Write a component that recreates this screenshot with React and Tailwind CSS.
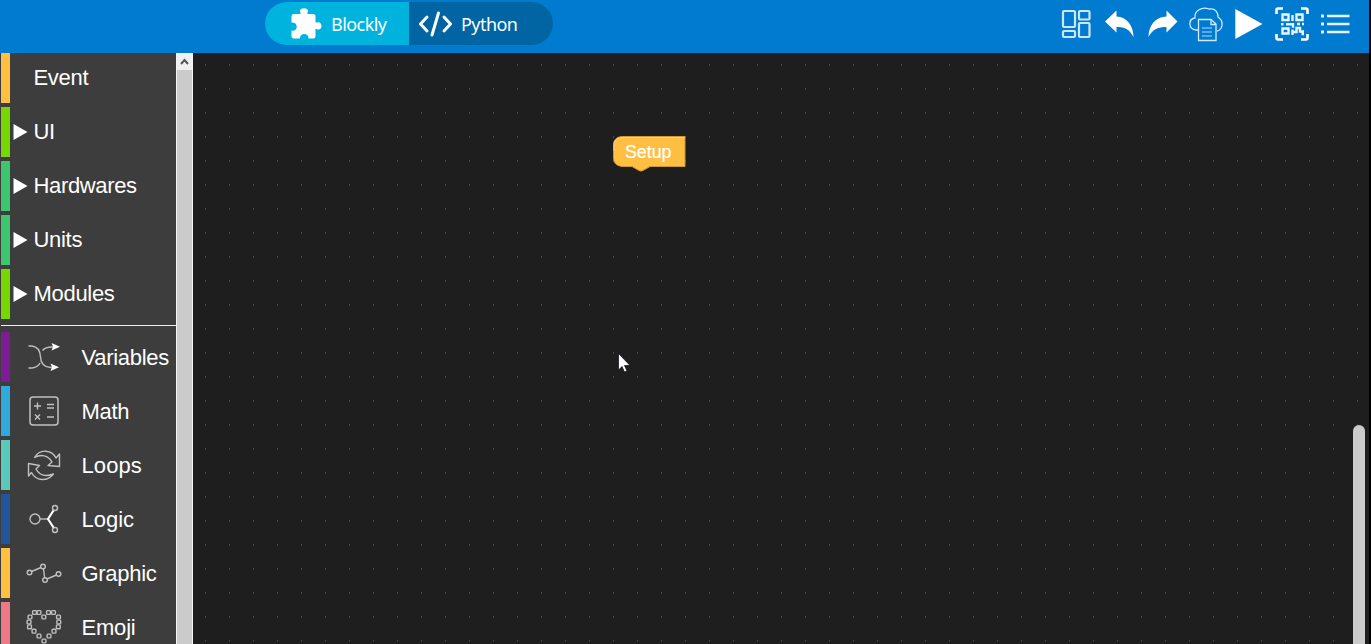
import React from "react";

const topItems = [
  { name: "Event", bar: "bg-[#ffbf42]", arrow: false, tracking: "tracking-[-0.3px]" },
  { name: "UI", bar: "bg-[#77d700]", arrow: true, tracking: "tracking-[-0.3px]" },
  { name: "Hardwares", bar: "bg-[#3dc66d]", arrow: true, tracking: "tracking-[-0.35px]" },
  { name: "Units", bar: "bg-[#3dc66d]", arrow: true, tracking: "tracking-[-0.3px]" },
  { name: "Modules", bar: "bg-[#77d700]", arrow: true, tracking: "tracking-[-0.3px]" },
];

const heart = [
  [12.5, 2.5], [17, 2.5], [26.5, 2.5], [31.5, 2.5], [8, 7], [21.8, 7], [36.5, 7], [7, 12], [36.8, 12], [7.5, 16.8], [36.3, 16.8],
  [12, 21.2], [32, 21.2], [17, 26], [27, 26], [22, 31],
];

const S = { fill: "none", stroke: "#c0c0c0", strokeWidth: 1.4, strokeLinejoin: "round" };

function Glyph({ kind }) {
  return (
    <svg className="h-[50px] w-11 shrink-0" viewBox="0 0 44 50" {...S}>
      {kind === "Variables" && (
        <>
          <path d="M6.500 14h3.500q8 1 8.500 11t10 10.500h4" />
          <path d="M6.500 36h3.500q6-1 8-5M20.500 18.500q3-3.500 9-3.500h4" />
          <path d="M29.500 11l8.500 3.800-8.500 3.700 1.500-3.700zM28.500 31.500l8.500 3.800-8.500 3.700 1.500-3.700z" fill="#fff" stroke="none" />
        </>
      )}
      {kind === "Math" && (
        <>
          <rect x="8" y="11" width="28" height="28" rx="3" strokeWidth="1.500" />
          <path d="M12 20h7M15.500 16.500v7M25 18.500h7M25 22h7M25 31h7M13 28.500l5 5M18 28.500l-5 5" />
        </>
      )}
      {kind === "Loops" && (
        <path d="M12.500 17.500C18 8 30 10 34 18L37.500 14v12.500l-11.500-1 4-3.500c-4-7-11-8-17.500-4.500zM31.500 34C25 42 14 41 9.500 32.500L6.500 36V23.500l11 2L14 29c3 6 9 8 17.500 5z" />
      )}
      {kind === "Logic" && (
        <>
          <circle cx="13" cy="25" r="5" /><circle cx="33" cy="14" r="2.500" /><circle cx="33" cy="36" r="2.500" />
          <path d="M18 25h7.500" />
          <path d="M31.500 16.500L26 25l5.500 8.500" stroke="#fff" strokeWidth="2.200" />
        </>
      )}
      {kind === "Graphic" && (
        <>
          <circle cx="7.500" cy="24.500" r="2.300" /><circle cx="21" cy="18.500" r="2.300" /><circle cx="23" cy="32" r="2.300" /><circle cx="36.500" cy="26" r="2.300" />
          <path d="M9.500 23.500l9.500-4M21.500 21l1.200 9M25 31l9.500-4" />
        </>
      )}
      {kind === "Emoji" && heart.map(([x, y]) => (
        <rect key={x + "-" + y} x={x - 1.9} y={y + 6.1} width="3.800" height="3.800" rx="0.800" />
      ))}
    </svg>
  );
}

const lowerItems = [
  { name: "Variables", bar: "bg-[#7c1d96]", tracking: "tracking-[-0.3px]" },
  { name: "Math", bar: "bg-[#30a9df]", tracking: "tracking-[-0.3px]" },
  { name: "Loops", bar: "bg-[#5ac9b9]", tracking: "tracking-[0.1px]" },
  { name: "Logic", bar: "bg-[#23559d]", tracking: "tracking-normal" },
  { name: "Graphic", bar: "bg-[#ffbf42]", tracking: "tracking-[-0.3px]" },
  { name: "Emoji", bar: "bg-[#f07886]", tracking: "tracking-[-0.2px]" },
];

function Toolbar() {
  return (
    <div className="ml-auto mr-[17px] flex h-12 items-center text-white">
      <svg className="h-12 w-11" viewBox="5 0 44 48" fill="none" stroke="#cde7fa" strokeWidth="2.200">
        <rect x="8" y="11" width="12" height="16" rx="1" /><rect x="24" y="11" width="10.500" height="8.500" rx="1" />
        <rect x="8" y="31" width="12" height="6" rx="1" /><rect x="24" y="23" width="10.500" height="14" rx="1" />
      </svg>
      <svg className="h-12 w-11" viewBox="5 0 44 48" fill="currentColor">
        <path d="M6 21.500L17.500 10.500V16.500C28 17 34.500 26 34.500 37C30 29 26 27 17.500 27V32.500Z" />
      </svg>
      <svg className="h-12 w-10" viewBox="5 0 40 48" fill="currentColor">
        <path d="M34.500 21.500L23.500 10.500V16.500C12 17 5.500 26 5.500 37C10 29 15 27 23.500 27V32.500Z" />
      </svg>
      <svg className="h-12 w-11 overflow-visible" viewBox="3 0 44 48" fill="none" stroke="#d3eaff" strokeWidth="1.300">
        <path d="M14 30H11C3 29 3 19 10 18C9 11 17 6 24 9C31 8 33 13 33 17C40 22 37 30 32 31" />
        <path d="M13.500 19.500H26L31 24V40.500H13.500ZM26 20v4.500H31" /><path d="M17 28h10M17 32h10M17 36h10" stroke="#76b9eb" />
      </svg>
      <svg className="h-12 w-11" viewBox="0 0 44 48" fill="currentColor"><path d="M3.300 9L30.500 24L3.300 39Z" /></svg>
      <svg className="h-12 w-11 overflow-visible" viewBox="1 0 44 48" fill="none" stroke="currentColor" strokeWidth="2.600">
        <path d="M1.500 14V10q0-1.500 1.500-1.500H8M26 8.500h5q1.500 0 1.500 1.500v4M32.500 34v4q0 1.500-1.500 1.500h-5M8 39.500H3q-1.500 0-1.500-1.500v-4" />
        <g stroke="#eaf6ff" strokeWidth="2.400">
          <path d="M7.500 14.500h6v5.500h-6zM21.500 14.500h6v5.500h-6zM7.500 28.500h6v5h-6z" />
          <path d="M17.500 15v6M6 24.200h2.500M11 24.200h7v3.500M22 24h3M27 24h2M17.500 29.500v5.500M18 32h3.500v-4h4.500M25 27v4.500h4M26.500 34h2.500" />
        </g>
      </svg>
      <svg className="h-12 w-8" viewBox="0 0 32 48" fill="none" stroke="#e4f3ff" strokeWidth="2.600">
        <path d="M7 16h22.500M7 24h22.500M7 32h22.500" /><path d="M1 16h3M1 24h3M1 32h3" strokeWidth="3" />
      </svg>
    </div>
  );
}

export default function App() {
  return (
    <div className="flex h-[644px] w-[1371px] overflow-hidden bg-black font-['Liberation_Sans',sans-serif] text-white">
      <div className="flex w-[1369px] flex-col">
        <header className="flex h-[53px] shrink-0 items-start bg-[#007bd0]">
          <div className="ml-[265px] mt-[2px] flex h-[43px] w-72 overflow-hidden rounded-full bg-[#0065a2] font-['Noto_Sans',sans-serif] text-[18px] tracking-[-0.55px]">
            <div className="flex w-36 items-center bg-[#00b3df]">
              <svg className="ml-[25px] h-[31px] w-8" viewBox="0 0 32 31" fill="currentColor">
                <path d="M4 6H10.500C11 4.500 9.500 4 10 2.500C11-0.500 17-0.500 18 2.500C18.500 4 17 4.500 17.500 6H23Q25.500 6 25.500 8.500V14.500C27 15 28 13.500 29.500 14.500C32.500 16 32 21 29 21.500C27.500 22 27 20.500 25.500 21V28Q25.500 30.500 23 30.500H18.500C19 24.500 9.500 24.500 10 30.500H4Q1.500 30.500 1.500 28V22.500C8 24 9 14 1.500 14.500V8.500Q1.500 6 4 6Z" />
              </svg>
              <span className="ml-[9px] w-[57px] pt-px">Blockly</span>
            </div>
            <div className="flex w-36 items-center">
              <svg className="ml-[9px] h-8 w-9" viewBox="0 0 36 32" fill="none" stroke="currentColor" strokeWidth="3" strokeLinecap="round" strokeLinejoin="round">
                <path d="M9 9L2.500 16L9 23M26 9L32.500 16L26 23M20.500 5L14 27" />
              </svg>
              <span className="ml-[7px] pt-px">Python</span>
            </div>
          </div>
          <Toolbar />
        </header>
        <main className="flex min-h-0 flex-1">
          <nav className="w-44 shrink-0 overflow-hidden bg-[#3d3d3d] pl-px text-[22px]">
            <div className="flex flex-col gap-1">
              {topItems.map((item) => (
                <div key={item.name} className="flex h-[50px] items-center">
                  <span className={"h-full w-[9px] " + item.bar} />
                  <svg className="mb-px ml-[3px] h-4 w-[15px]" viewBox="0 0 15 16" fill="#fff">{item.arrow && <path d="M0.500 0L14.500 8L0.500 16Z" />}</svg>
                  <span className={"ml-[5.500px] leading-6 " + item.tracking}>{item.name}</span>
                </div>
              ))}
            </div>
            <div className="mt-[6px] mb-[6px] h-px bg-[#eeeeee]" />
            <div className="flex flex-col gap-1">
              {lowerItems.map((item) => (
                <div key={item.name} className="flex h-[50px] shrink-0 items-center">
                  <span className={"h-full w-[9px] shrink-0 " + item.bar} />
                  <span className="ml-3 flex"><Glyph kind={item.name} /></span>
                  <span className={"ml-[15.500px] pt-[2px] leading-6 " + item.tracking}>{item.name}</span>
                </div>
              ))}
            </div>
          </nav>
          <div className="w-[17px] shrink-0 border-x border-[#f5f5f5] bg-[#cbcbcb]">
            <div className="flex h-[17px] items-center justify-center bg-[#f0f0f0]">
              <svg className="h-[7px] w-[9px]" viewBox="0 0 9 7" fill="none" stroke="#555" strokeWidth="2"><path d="M1 6L4.500 2L8 6" /></svg>
            </div>
          </div>
          <section className="relative flex-1 overflow-hidden bg-[#1e1e1e]">
            <svg className="h-full w-full">
              <defs>
                <pattern id="grid" x="12" y="11" width="24" height="24" patternUnits="userSpaceOnUse">
                  <rect x="0" y="0" width="1" height="1" fill="#4a4a4a" /><rect x="0" y="1" width="1" height="1" fill="#444444" />
                </pattern>
              </defs>
              <rect width="100%" height="100%" fill="url(#grid)" />
            </svg>
            <div className="absolute left-[420px] top-[83px] flex">
              <svg className="h-9 w-[73px]" viewBox="0 0 73 36">
                <path d="M8.500 0.500H72V30.500H37L30 34.500Q28 35.500 26 34.500L19 30.500H8.500Q0.500 29 0.500 22V9Q0.500 1.500 8.500 0.500Z" fill="#ffbf42" stroke="#cc9935" />
                <path d="M1 15V9Q1 2 9 1.500H71.500" fill="none" stroke="#ffd27a" />
                <text x="12" y="22" fill="#fff" stroke="#fff" strokeWidth="0.200" fontSize="17.800">Setup</text>
              </svg>
            </div>
            <svg className="absolute left-[425px] top-[300px] h-5 w-3" viewBox="0 0 12 20">
              <path d="M0.500 0.500V17L4 13.500L6.500 19L9 18L6.500 12.500H12Z" fill="#fff" stroke="#080818" strokeWidth="0.700" />
            </svg>
            <div className="absolute left-[1160px] top-[372px] h-80 w-3 rounded-full bg-[#cbcbcb]" />
          </section>
        </main>
      </div>
    </div>
  );
}
